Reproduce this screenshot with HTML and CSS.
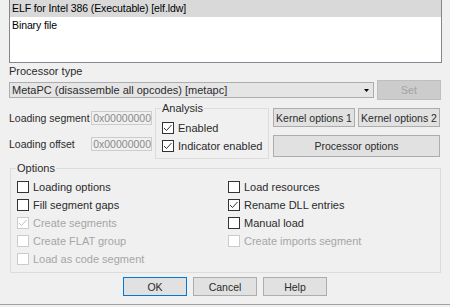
FILE: index.html
```html
<!DOCTYPE html>
<html lang="en">
<head>
    <meta charset="UTF-8">
    <title>Load a new file</title>
    <link rel="stylesheet" href="styles.css">
</head>
<body>
    <div class="file-list">
        <div class="item selected">ELF for Intel 386 (Executable) [elf.ldw]</div>
        <div class="item">Binary file</div>
    </div>

    <div class="proc-label">Processor type</div>
    <div class="proc-row">
        <div class="combo">
            <span>MetaPC (disassemble all opcodes) [metapc]</span>
            <svg class="arrow" width="5" height="3" viewBox="0 0 5 3"><path d="M0 0H5L2.5 3Z" fill="#000"/></svg>
        </div>
        <button class="btn set" disabled>Set</button>
    </div>

    <div class="middle">
        <div class="addr">
            <div class="addr-row">
                <span class="addr-label">Loading segment</span>
                <div class="field"><span>0x00000000</span></div>
            </div>
            <div class="addr-row">
                <span class="addr-label">Loading offset</span>
                <div class="field"><span>0x00000000</span></div>
            </div>
        </div>

        <fieldset class="group analysis">
            <legend>Analysis</legend>
            <label class="check"><span class="box on"></span>Enabled</label>
            <label class="check"><span class="box on"></span>Indicator enabled</label>
        </fieldset>

        <div class="opts-buttons">
            <div class="kernel-row">
                <button class="btn kernel">Kernel options 1</button>
                <button class="btn kernel">Kernel options 2</button>
            </div>
            <button class="btn proc">Processor options</button>
        </div>
    </div>

    <fieldset class="group options">
        <legend>Options</legend>
        <div class="col left">
            <label class="check"><span class="box"></span>Loading options</label>
            <label class="check"><span class="box"></span>Fill segment gaps</label>
            <label class="check off"><span class="box on"></span>Create segments</label>
            <label class="check off"><span class="box"></span>Create FLAT group</label>
            <label class="check off"><span class="box"></span>Load as code segment</label>
        </div>
        <div class="col">
            <label class="check"><span class="box"></span>Load resources</label>
            <label class="check"><span class="box on"></span>Rename DLL entries</label>
            <label class="check"><span class="box"></span>Manual load</label>
            <label class="check off"><span class="box"></span>Create imports segment</label>
        </div>
    </fieldset>

    <div class="actions">
        <button class="btn default">OK</button>
        <button class="btn">Cancel</button>
        <button class="btn">Help</button>
    </div>
    <div class="bottom-line"></div>
</body>
</html>
```
FILE: styles.css
```css
body {
    margin: 0;
    width: 450px;
    height: 307px;
    overflow: hidden;
    background-color: #f0f0f0;
    font-family: "Liberation Sans", Arial, sans-serif;
    font-size: 11px;
    color: #2b2b2b;
}
.file-list {
    box-sizing: border-box;
    margin: -1px 0 0 9px;
    width: 433px;
    height: 64px;
    border: 1px solid #828790;
    background-color: white;
    color: #000;
    font-size: 10.5px;
    letter-spacing: -0.1px;
}
.item {
    height: 17px;
    line-height: 17px;
    padding-left: 2px;
}
.item.selected {
    background-color: #d9d9d9;
}
.proc-label {
    height: 17px;
    line-height: 16px;
    padding-left: 9px;
}
.proc-row {
    display: flex;
    align-items: center;
    gap: 3px;
    margin-left: 9px;
    height: 20px;
}
.combo {
    box-sizing: border-box;
    width: 365px;
    height: 16px;
    border: 1px solid #adadad;
    background-color: #e5e5e5;
    display: flex;
    align-items: center;
    justify-content: space-between;
    padding: 0 4px 0 2px;
    line-height: 14px;
}
.btn {
    box-sizing: border-box;
    margin: 0;
    padding: 0;
    border: 1px solid #adadad;
    background-color: #e1e1e1;
    font-family: inherit;
    font-size: 10.5px;
    color: #2b2b2b;
    white-space: nowrap;
}
.btn.set {
    width: 64px;
    height: 20px;
    background-color: #cccccc;
    border-color: #bfbfbf;
    color: #a3a3a3;
}
.middle {
    display: flex;
    align-items: flex-start;
    height: 59px;
    margin-left: 9px;
}
.addr {
    display: flex;
    flex-direction: column;
    gap: 12px;
    padding-top: 11px;
}
.addr-row {
    display: flex;
    align-items: center;
    height: 14px;
}
.addr-label {
    width: 82px;
    white-space: nowrap;
    font-size: 10.5px;
}
.field {
    box-sizing: border-box;
    width: 61px;
    height: 14px;
    border: 1px solid #cccccc;
    display: flex;
    justify-content: flex-end;
    overflow: hidden;
    line-height: 12px;
    font-size: 10.5px;
    color: #8a8a8a;
}
.field span {
    flex-shrink: 0;
}
.group {
    box-sizing: border-box;
    margin: 0;
    border: 1px solid #dcdcdc;
}
.group legend {
    padding: 0 1px;
    margin-left: -1px;
    line-height: 14px;
}
.analysis {
    width: 114px;
    margin: 1px 0 0 3px;
    padding: 4px 0 3px 6px;
}
.check {
    display: flex;
    align-items: center;
    gap: 4px;
    height: 18px;
    white-space: nowrap;
}
.check.off {
    color: #a6a6a6;
}
.box {
    box-sizing: border-box;
    width: 12px;
    height: 12px;
    border: 1px solid #333333;
    background-color: white;
}
.check.off .box {
    border-color: #cccccc;
}
.box.on {
    background: white url("data:image/svg+xml,%3Csvg xmlns='http://www.w3.org/2000/svg' width='10' height='10'%3E%3Cpath d='M1 5L3.5 7.5L8.5 2' fill='none' stroke='%23333' stroke-width='1'/%3E%3C/svg%3E") center no-repeat;
}
.check.off .box.on {
    background-image: url("data:image/svg+xml,%3Csvg xmlns='http://www.w3.org/2000/svg' width='10' height='10'%3E%3Cpath d='M1 5L3.5 7.5L8.5 2' fill='none' stroke='%23c0c0c0' stroke-width='1'/%3E%3C/svg%3E");
}
.opts-buttons {
    display: flex;
    flex-direction: column;
    gap: 8px;
    margin-left: 4px;
    padding-top: 8px;
}
.kernel-row {
    display: flex;
    gap: 3px;
}
.btn.kernel {
    width: 82px;
    height: 19px;
}
.btn.proc {
    width: 167px;
    height: 22px;
}
.options {
    display: flex;
    width: 431px;
    margin: 2px 0 0 10px;
    padding: 3px 0 4px 6px;
}
.col.left {
    width: 211px;
}
.actions {
    display: flex;
    justify-content: center;
    gap: 6px;
    margin-top: 4px;
}
.actions .btn {
    width: 64px;
    height: 19px;
}
.btn.default {
    border-color: #0078d7;
}
.bottom-line {
    margin-top: 8px;
    height: 1px;
    background-color: #a0a0a0;
}
```
